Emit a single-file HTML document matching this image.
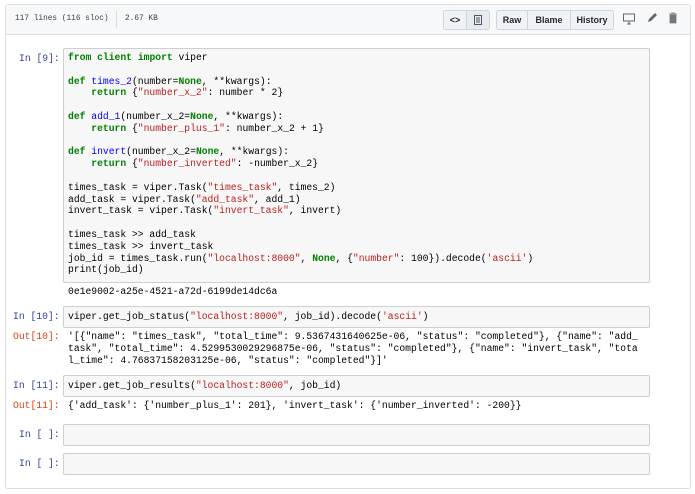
<!DOCTYPE html>
<html><head><style>
body{margin:0;background:#fff;font-family:"Liberation Sans",sans-serif;}
.wrap{position:absolute;left:5px;top:4px;width:684px;height:483px;border:1px solid #ddd;border-radius:3px;}
.hdr{position:absolute;left:0;top:0;width:684px;height:29px;background:#f6f8fa;border-bottom:1px solid #ddd;font-family:"Liberation Mono",monospace;font-size:7.8px;color:#444;}
.mono{font-family:"Liberation Mono",monospace;font-size:9.7px;white-space:pre;line-height:11.8px;}
.box{position:absolute;left:63px;width:585px;background:#f7f7f7;border:1px solid #cfcfcf;border-radius:2px;}
.p{position:absolute;font-family:"Liberation Mono",monospace;font-size:9.7px;white-space:pre;}
.in{color:#303f9f}.out{color:#d84315}
.k{color:#008000;font-weight:bold}.s{color:#ba2121}.f{color:#0000ff}
.btn{position:absolute;top:5px;height:18px;border:1px solid #d1d5da;background:#eff3f6;font-family:"Liberation Sans",sans-serif;font-size:9px;font-weight:bold;color:#24292e;line-height:18px;text-align:center;}
</style></head><body>
<div class="wrap">
<div class="hdr">
<span style="position:absolute;left:9px;top:10px">117 lines (116 sloc)</span>
<span style="position:absolute;left:110px;top:6px;height:17px;border-left:1px solid #ddd"></span>
<span style="position:absolute;left:119px;top:10px">2.67 KB</span>
<div class="btn" style="left:437px;width:22px;border-radius:3px 0 0 3px;">&lt;&gt;</div>
<div class="btn" style="left:460px;width:22px;border-radius:0 3px 3px 0;background:#e6ebf1"><svg width="8" height="10" style="margin-top:4px"><rect x="0.5" y="0.5" width="7" height="9" fill="none" stroke="#555"/><path d="M2 3h4M2 5h4M2 7h4" stroke="#555"/></svg></div>
<div class="btn" style="left:490px;width:30px;border-radius:3px 0 0 3px">Raw</div>
<div class="btn" style="left:521px;width:42px">Blame</div>
<div class="btn" style="left:564px;width:42px;border-radius:0 3px 3px 0">History</div>
<svg style="position:absolute;left:617px;top:8px" width="12" height="12"><rect x="0.5" y="1" width="11" height="7" fill="none" stroke="#666"/><path d="M4 11h4M6 8v3" stroke="#666"/></svg>
<svg style="position:absolute;left:640px;top:7px" width="12" height="12"><path d="M2 10l1-3 6-6 2 2-6 6z" fill="#666"/></svg>
<svg style="position:absolute;left:662px;top:7px" width="10" height="12"><path d="M1 2h8M3 1h4M2 3h6v8H2z" fill="#777" stroke="#777" stroke-width=".8"/></svg>
</div>
</div>

<div class="p in" style="left:19px;top:53px">In [9]:</div>
<div class="box" style="top:48px;height:233px"></div>
<div class="mono" style="position:absolute;left:68px;top:52px"><span class="k">from</span> <span class="k">client</span> <span class="k">import</span> viper

<span class="k">def</span> <span class="f">times_2</span>(number=<span class="k">None</span>, **kwargs):
    <span class="k">return</span> {<span class="s">"number_x_2"</span>: number * 2}

<span class="k">def</span> <span class="f">add_1</span>(number_x_2=<span class="k">None</span>, **kwargs):
    <span class="k">return</span> {<span class="s">"number_plus_1"</span>: number_x_2 + 1}

<span class="k">def</span> <span class="f">invert</span>(number_x_2=<span class="k">None</span>, **kwargs):
    <span class="k">return</span> {<span class="s">"number_inverted"</span>: -number_x_2}

times_task = viper.Task(<span class="s">"times_task"</span>, times_2)
add_task = viper.Task(<span class="s">"add_task"</span>, add_1)
invert_task = viper.Task(<span class="s">"invert_task"</span>, invert)

times_task &gt;&gt; add_task
times_task &gt;&gt; invert_task
job_id = times_task.run(<span class="s">"localhost:8000"</span>, <span class="k">None</span>, {<span class="s">"number"</span>: 100}).decode(<span class="s">'ascii'</span>)
print(job_id)</div>
<div class="p" style="left:68px;top:286px">0e1e9002-a25e-4521-a72d-6199de14dc6a</div>

<div class="p in" style="left:13px;top:311px">In [10]:</div>
<div class="box" style="top:306px;height:20px"></div>
<div class="p" style="left:68px;top:311px">viper.get_job_status(<span class="s">"localhost:8000"</span>, job_id).decode(<span class="s">'ascii'</span>)</div>
<div class="p out" style="left:13px;top:331px">Out[10]:</div>
<div class="mono" style="position:absolute;left:68px;top:331px">'[{"name": "times_task", "total_time": 9.5367431640625e-06, "status": "completed"}, {"name": "add_
task", "total_time": 4.5299530029296875e-06, "status": "completed"}, {"name": "invert_task", "tota
l_time": 4.76837158203125e-06, "status": "completed"}]'</div>

<div class="p in" style="left:13px;top:380px">In [11]:</div>
<div class="box" style="top:375px;height:20px"></div>
<div class="p" style="left:68px;top:380px">viper.get_job_results(<span class="s">"localhost:8000"</span>, job_id)</div>
<div class="p out" style="left:13px;top:400px">Out[11]:</div>
<div class="p" style="left:68px;top:400px">{'add_task': {'number_plus_1': 201}, 'invert_task': {'number_inverted': -200}}</div>

<div class="p in" style="left:19px;top:429px">In [ ]:</div>
<div class="box" style="top:424px;height:20px"></div>
<div class="p in" style="left:19px;top:458px">In [ ]:</div>
<div class="box" style="top:453px;height:20px"></div>
</body></html>
